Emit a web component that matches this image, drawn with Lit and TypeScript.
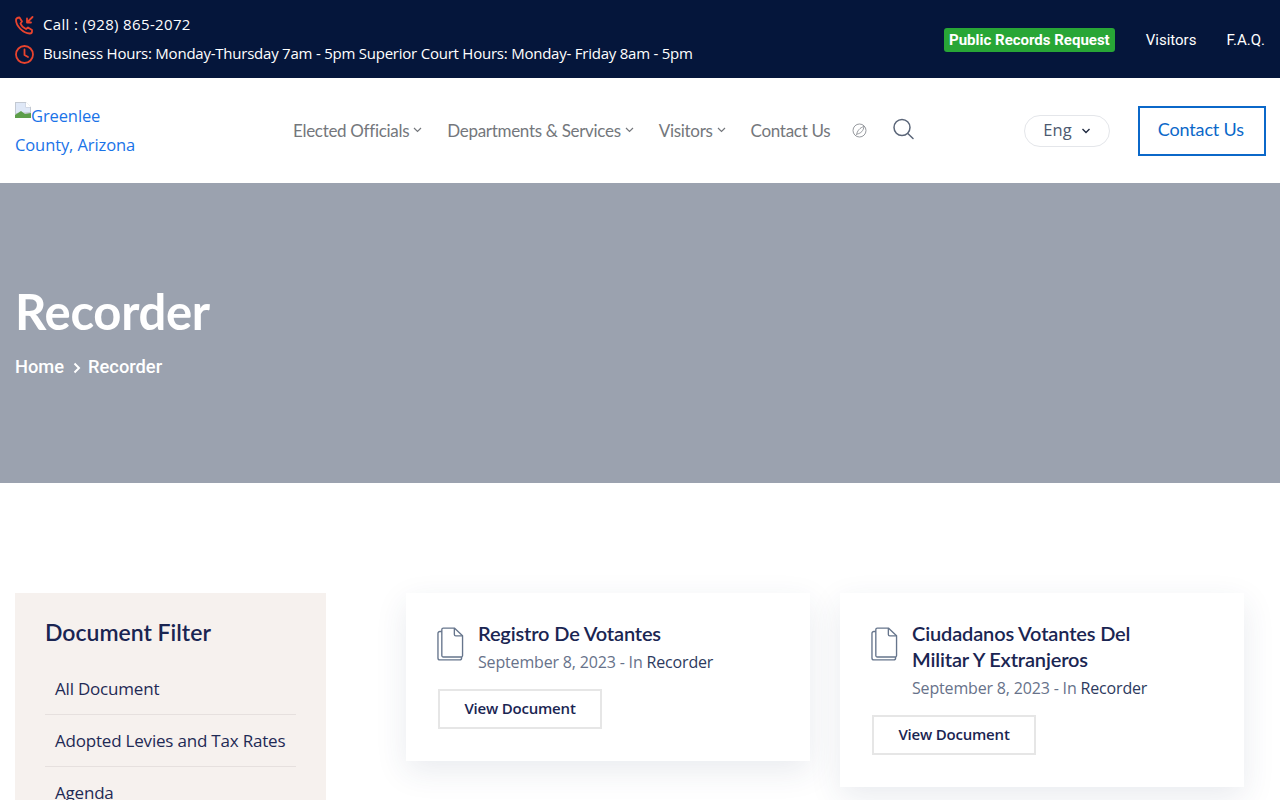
import { LitElement, html, css } from "lit";
import { customElement } from "lit/decorators.js";

const chev = (c: string, w = 9, sw = 1.2) => html`<svg class="chev" width=${w} height="6" viewBox="0 0 9 6" fill="none" stroke=${c} stroke-width=${sw}><path d="M1 1l3.5 3.5L8 1"/></svg>`;

const docIcon = html`<svg class="doc" width="27" height="35" viewBox="0 0 28 36" fill="none" stroke="#66758c" stroke-width="1.4" stroke-linejoin="round">
  <path d="M5 2.500a1.500 1.500 0 0 1 1.500-1.500H18l8.500 8v20.500a1.500 1.500 0 0 1-1.500 1.500H6.500a1.500 1.500 0 0 1-1.500-1.500z"/>
  <path d="M18 1v6.500a1.500 1.500 0 0 0 1.500 1.500h7"/>
  <path d="M5 4.500H3a2 2 0 0 0-2 2V32a2 2 0 0 0 2 2h20.500a2 2 0 0 0 2-2v-1"/>
</svg>`;

@customElement("app-root")
export class AppRoot extends LitElement {
  static styles = css`
    :host { display: block; height: 800px; overflow: hidden; background: #fff; font-family: "Noto Sans", sans-serif; }
    a { text-decoration: none; color: inherit; }
    .top { height: 78px; background: #05163b; display: flex; justify-content: space-between; align-items: center; padding: 0 15px; box-sizing: border-box; color: #fff; }
    .contacts { display: flex; flex-direction: column; gap: 9px; font-family: "Open Sans", sans-serif; font-size: 15px; line-height: 18px; }
    .contacts div { display: flex; align-items: flex-start; gap: 9px; height: 20px; }
    .contacts svg { margin-top: 1px; }
    .call { letter-spacing: 0.35px; }
    .hours { letter-spacing: -0.23px; }
    .toplinks { display: flex; align-items: center; font-family: Roboto, sans-serif; font-size: 15px; padding-top: 1px; }
    .pill { background: #28a636; border-radius: 3px; font-weight: 700; padding: 0 5px; height: 24px; line-height: 24px; margin-right: 31px; }
    .faq { margin-left: 30px; }
    .nav { height: 105px; display: flex; align-items: center; padding: 0 14px 0 15px; box-sizing: border-box; }
    .logo { flex: none; width: 130px; padding-bottom: 2px; color: #1a73e8; font-family: "Open Sans", sans-serif; font-size: 16.500px; line-height: 29px; letter-spacing: -0.1px; }
    .logo svg { vertical-align: 4px; margin-top: -8px; }
    .menu { flex: none; display: flex; align-items: center; margin-left: 148px; font-family: Lato, sans-serif; font-size: 17px; letter-spacing: -0.3px; color: #74777c; padding-bottom: 1px; }
    .menu a { display: flex; align-items: center; gap: 4px; margin-right: 25px; white-space: nowrap; }
    .menu a:nth-child(4) { margin-right: 22px; }
    .ball { margin-right: 26px; margin-top: 1px; }
    .search { margin-top: -3px; }
    .lang { flex: none; margin-left: 110px; width: 86px; height: 32px; box-sizing: border-box; border: 1px solid #e4e6ea; border-radius: 16px; display: flex; align-items: center; gap: 9px; padding: 0 0 2px 18px; font-family: "Open Sans", sans-serif; font-size: 16.500px; color: #4d5a70; }
    .lang .chev { margin-top: 3px; }
    .cta { flex: none; margin-left: 28px; width: 128px; height: 50px; box-sizing: border-box; border: 2px solid #0b68c9; color: #0b68c9; display: flex; align-items: center; justify-content: center; font-family: Lato, sans-serif; font-size: 18px; letter-spacing: -0.15px; padding: 0 3px 3px 0; }
    .hero { height: 300px; background: #9ba2af; color: #fff; padding: 100px 15px 0; box-sizing: border-box; font-family: Lato, sans-serif; }
    .hero h1 { margin: 0; font-size: 49px; line-height: 56px; font-weight: 700; letter-spacing: -0.3px; }
    .crumbs { display: flex; align-items: center; gap: 7px; margin-top: 14px; font-family: Roboto, sans-serif; font-size: 18.300px; line-height: 28px; font-weight: 500; }
    .crumbs svg { margin-left: 2px; margin-top: 2px; }
    .content { display: flex; align-items: flex-start; padding: 110px 36px 0 15px; }
    .side { width: 311px; height: 300px; flex: none; background: #f6f1ee; box-sizing: border-box; padding: 24px 30px; margin-right: 80px; }
    .side h2 { margin: 0 0 16px; font-family: Lato, sans-serif; font-size: 23px; line-height: 30px; font-weight: 600; color: #1a2552; }
    .side a { display: block; height: 52px; line-height: 52px; padding-left: 10px; box-sizing: border-box; border-bottom: 1px solid #e6e0de; font-family: "Open Sans", sans-serif; font-size: 17px; letter-spacing: -0.2px; color: #1f2a55; }
    .cards { display: flex; align-items: flex-start; gap: 30px; flex: 1; }
    .card { width: 404px; flex: none; background: #fff; box-shadow: 0 10px 30px rgba(40, 60, 100, 0.1); box-sizing: border-box; padding: 27px 32px 32px; display: grid; grid-template-columns: 40px 1fr; }
    .doc { margin: 7px 0 0 -1px; }
    .card h3 { margin: 0; font-family: Lato, sans-serif; font-size: 20px; letter-spacing: -0.15px; line-height: 26px; font-weight: 600; color: #1a2552; }
    .meta { font-family: "Open Sans", sans-serif; font-size: 16px; line-height: 26px; letter-spacing: -0.17px; color: #67728a; margin-top: 3px; }
    .meta a { color: #2d3a5e; }
    .btn { grid-column: 1 / 3; margin-top: 14px; width: 164px; height: 40px; box-sizing: border-box; border: 2px solid #e6e6e6; padding-bottom: 2px; display: flex; align-items: center; justify-content: center; font-family: "Open Sans", sans-serif; font-size: 15px; font-weight: 600; letter-spacing: -0.2px; color: #1a2552; }
  `;

  card(title: unknown) {
    return html`<div class="card">
      ${docIcon}
      <div><h3>${title}</h3><div class="meta">September 8, 2023 - In <a href="#">Recorder</a></div></div>
      <a class="btn" href="#">View Document</a>
    </div>`;
  }

  render() {
    return html`
      <div class="top">
        <div class="contacts">
          <div>
            <svg width="19" height="19" viewBox="0 0 19 19" fill="none" stroke="#e8432e" stroke-width="1.800" stroke-linecap="round" stroke-linejoin="round">
              <path d="M4.500 1.500l2.500 4-1.500 2c.8 2.200 2.800 4.200 5.500 5.500l2-1.500 4 2.500v1.500c0 1.200-1 2-2.200 2C8 17 1 10 1 4c0-1.500 1-2.500 3.500-2.500z"/>
              <path d="M17.500 1l-5.500 5.500M12 2.500v4h4"/>
            </svg>
            <span class="call">Call : (928) 865-2072</span>
          </div>
          <div>
            <svg width="19" height="19" viewBox="0 0 19 19" fill="none" stroke="#e8432e" stroke-width="1.800" stroke-linecap="round" stroke-linejoin="round">
              <circle cx="9.500" cy="9.500" r="8.500"/><path d="M9.500 4.500v5.500l3.500 2"/>
            </svg>
            <span class="hours">Business Hours: Monday-Thursday 7am - 5pm Superior Court Hours: Monday- Friday 8am - 5pm</span>
          </div>
        </div>
        <div class="toplinks">
          <a class="pill" href="#">Public Records Request</a>
          <a href="#">Visitors</a>
          <a class="faq" href="#">F.A.Q.</a>
        </div>
      </div>
      <div class="nav">
        <a class="logo" href="#"><svg width="16" height="16" viewBox="0 0 16 16"><path d="M0 0h11l5 5v11H0z" fill="#c3c9d2"/><path d="M1 1h9.500v4.500H15V10L1 11z" fill="#dfe8f7"/><path d="M0 16v-3l6-4 4 3 6-1v5z" fill="#5d9e4a"/><path d="M11 0l5 5h-5z" fill="#fff"/></svg>Greenlee County, Arizona</a>
        <div class="menu">
          <a href="#">Elected Officials ${chev("#74777c")}</a>
          <a href="#">Departments &amp; Services ${chev("#74777c")}</a>
          <a href="#">Visitors ${chev("#74777c")}</a>
          <a href="#">Contact Us</a>
          <svg class="ball" width="15" height="15" viewBox="0 0 15 15" fill="none" stroke="#8b8f94" stroke-width="0.9"><circle cx="7.500" cy="7.500" r="6.500"/><path d="M4.500 12C5 8 8 4.500 12 3.500 11.500 7.500 9 10.500 5 11"/></svg>
          <svg class="search" width="21" height="22" viewBox="0 0 21 22" fill="none" stroke="#5a6578" stroke-width="1.500" stroke-linecap="round"><circle cx="9" cy="9.500" r="8"/><path d="M14.800 15.500l5.200 5"/></svg>
        </div>
        <div class="lang">Eng ${chev("#1f2a40", 10, 1.4)}</div>
        <a class="cta" href="#">Contact Us</a>
      </div>
      <div class="hero">
        <h1>Recorder</h1>
        <div class="crumbs"><span>Home</span><svg width="8" height="12" viewBox="0 0 8 12" fill="none" stroke="#fff" stroke-width="2"><path d="M1.500 1.500L6 6l-4.500 4.500"/></svg><span>Recorder</span></div>
      </div>
      <div class="content">
        <aside class="side">
          <h2>Document Filter</h2>
          <a href="#">All Document</a>
          <a href="#">Adopted Levies and Tax Rates</a>
          <a href="#">Agenda</a>
        </aside>
        <div class="cards">
          ${this.card("Registro De Votantes")}
          ${this.card(html`Ciudadanos Votantes Del<br />Militar Y Extranjeros`)}
        </div>
      </div>
    `;
  }
}
